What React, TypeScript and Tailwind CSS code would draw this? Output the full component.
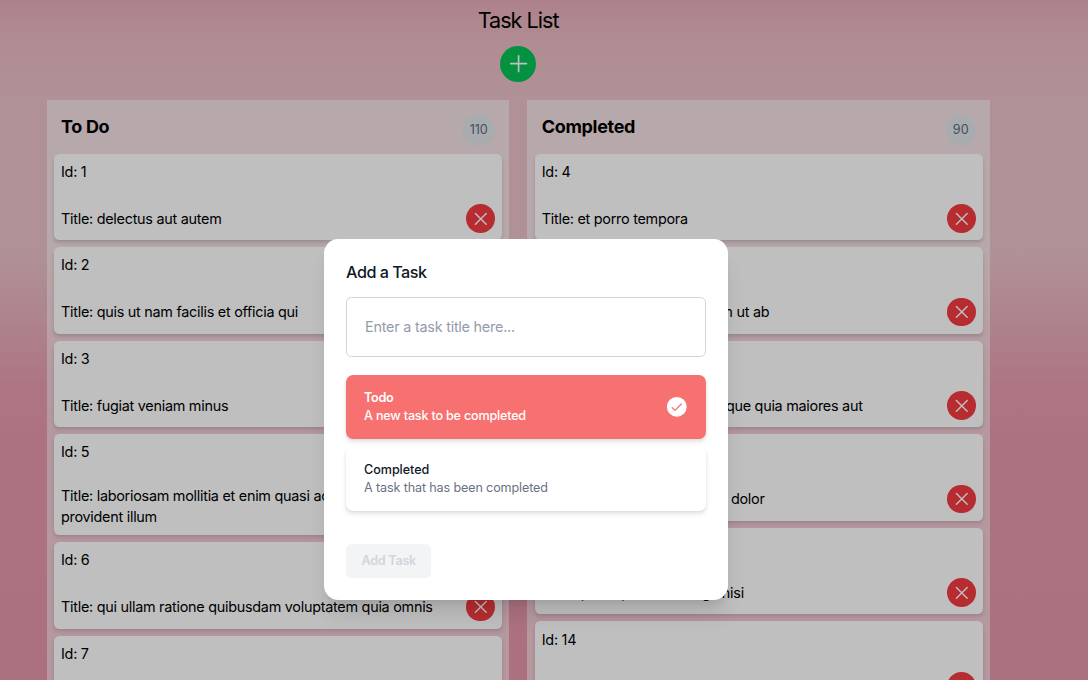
import { ReactNode } from "react";

type Task = { id: number; title: string };

const todo: Task[] = [
  { id: 1, title: "delectus aut autem" },
  { id: 2, title: "quis ut nam facilis et officia qui" },
  { id: 3, title: "fugiat veniam minus" },
  { id: 5, title: "laboriosam mollitia et enim quasi adipisci quia provident illum" },
  { id: 6, title: "qui ullam ratione quibusdam voluptatem quia omnis" },
  { id: 7, title: "illo expedita consequatur quia in" },
];

const completed: Task[] = [
  { id: 4, title: "et porro tempora" },
  { id: 8, title: "quo adipisci enim quam ut ab" },
  { id: 10, title: "illo est ratione doloremque quia maiores aut" },
  { id: 11, title: "vero rerum temporibus dolor" },
  { id: 12, title: "ipsa repellendus fugit nisi" },
  { id: 14, title: "repellendus sunt dolores architecto voluptatum" },
];

function TaskCard({ task }: { task: Task }) {
  return (
    <li className="mb-2 flex flex-col rounded-md bg-white p-2 tracking-[-0.0185em] shadow-md">
      <span>Id: {task.id}</span>
      <div className="mt-6 flex items-center justify-between">
        <p className="pr-6">Title: {task.title}</p>
        <button className="flex size-8 shrink-0 items-center justify-center rounded-full bg-[#f43b40] text-white">
          <svg className="size-6" viewBox="0 0 24 24" fill="none" stroke="currentColor" strokeWidth="1.6" strokeLinecap="round" strokeLinejoin="round">
            <path d="M6 18 18 6M6 6l12 12" />
          </svg>
        </button>
      </div>
    </li>
  );
}

function Column({ title, count, tasks }: { title: string; count: number; tasks: Task[] }) {
  return (
    <section className="flex-1 bg-white/50 p-2">
      <header className="flex items-start justify-between p-2">
        <h2 className="text-xl font-bold tracking-[-0.018em]">{title}</h2>
        <span className="rounded-full bg-[#e0e6ea] p-2 text-sm text-[#626878]">{count}</span>
      </header>
      <ul>
        {tasks.map((task) => (
          <TaskCard key={task.id} task={task} />
        ))}
      </ul>
    </section>
  );
}

function Option({ title, text, selected }: { title: string; text: string; selected?: boolean }): ReactNode {
  return (
    <div
      className={
        selected
          ? "flex h-[71.4px] items-center justify-between rounded-lg bg-[#f87171] px-5 text-sm text-white shadow-md"
          : "flex h-[71.4px] items-center justify-between rounded-lg bg-white px-5 pt-[1.5px] text-sm text-gray-500 shadow-md"
      }
    >
      <div>
        <p className={selected ? "font-semibold tracking-[-0.025em] text-white" : "font-medium tracking-[-0.005em] text-gray-900"}>{title}</p>
        <p className={selected ? "font-medium tracking-[-0.0155em]" : "tracking-[-0.011em]"}>{text}</p>
      </div>
      {selected && (
        <svg className="size-6" viewBox="0 0 24 24" fill="none">
          <circle cx="12" cy="12" r="11" fill="#fff" />
          <path d="M7 13l3 3 7-7" stroke="#f87171" strokeWidth="1.5" strokeLinecap="round" strokeLinejoin="round" />
        </svg>
      )}
    </div>
  );
}

export default function App() {
  return (
    <div className="relative h-screen overflow-hidden bg-[linear-gradient(180deg,#e8adba_0px,#ebbcc4_45px,#ebc3c8_105px,#ebc3c8_250px,#e8adba_330px,#e79daf_385px,#e798ab_450px,#e697aa_680px)] font-['Inter',sans-serif] text-black">
      <div className="[zoom:0.9]">
        <div className="flex flex-col px-[51.8px] pt-[7px]">
          <div className="mr-[57.5px] flex flex-col items-center">
            <h1 className="text-2xl tracking-[-0.045em]">Task List</h1>
            <button className="mt-3 flex size-10 items-center justify-center rounded-full bg-[#06c357] text-white">
              <svg className="size-7" viewBox="0 0 24 24" fill="none" stroke="currentColor" strokeWidth="1.6" strokeLinecap="round">
                <path d="M12 4.5v15m7.5-7.5h-15" />
              </svg>
            </button>
          </div>
          <main className="mt-[19.8px] flex w-[1048.4px] items-start gap-5">
            <Column title="To Do" count={110} tasks={todo} />
            <Column title="Completed" count={90} tasks={completed} />
          </main>
        </div>
      </div>

      <div className="absolute inset-0 bg-black/25" />
      <div className="absolute top-[239px] left-[324px]">
        <div className="w-[449px] rounded-2xl bg-white p-6 pr-[24.8px] pl-[24.5px] shadow-xl [zoom:0.9]">
          <h3 className="pt-[1.6px] text-lg/6 font-medium tracking-[-0.031em] text-gray-900">Add a Task</h3>
          <input
            className="mt-[14.4px] block h-[67px] w-full rounded-md border border-gray-300 px-5 tracking-[-0.016em] placeholder:text-[#949cab]"
            placeholder="Enter a task title here..."
          />
          <div className="mt-5 flex flex-col gap-2">
            <Option title="Todo" text="A new task to be completed" selected />
            <Option title="Completed" text="A task that has been completed" />
          </div>
          <button className="mt-[37px] block rounded-md border border-transparent bg-gray-100 px-4 py-2 text-sm font-semibold tracking-[-0.02em] text-gray-300" disabled>
            Add Task
          </button>
        </div>
      </div>
    </div>
  );
}
